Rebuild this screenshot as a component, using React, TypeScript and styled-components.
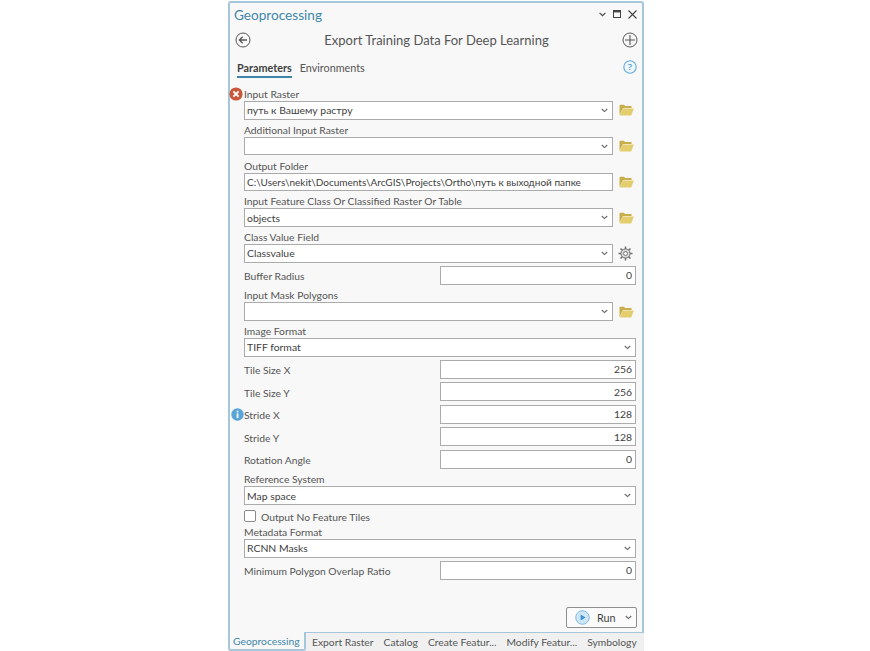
import styled, { createGlobalStyle } from 'styled-components';

const GlobalStyle = createGlobalStyle`
  html, body {
    margin: 0;
    background: #ffffff;
    font-family: "Lato", "Open Sans", sans-serif;
  }
`;

const Chevron = () => (
  <svg width="7" height="5" viewBox="0 0 7 5">
    <path d="M0.8 1 L3.5 3.6 L6.2 1" fill="none" stroke="#666" strokeWidth="1.1" />
  </svg>
);

const FolderIcon = () => (
  <svg width="15" height="12" viewBox="0 0 15 12">
    <path d="M0.5 11 V1.6 Q0.5 0.8 1.3 0.8 H5 L6.2 2 H12 Q12.6 2 12.6 2.8 V4 H4 L0.5 11 Z" fill="#c9ae4e" />
    <path d="M0.7 11.4 L3.9 4.6 H14.8 L12.2 11.4 Z" fill="#e4cd6d" />
  </svg>
);

const GearIcon = () => (
  <svg width="15" height="15" viewBox="0 0 15 15">
    <g stroke="#6f6f6f" strokeWidth="1.5">
      <path d="M7.5 0.5 V14.5 M0.5 7.5 H14.5 M2.5 2.5 L12.5 12.5 M12.5 2.5 L2.5 12.5" />
    </g>
    <circle cx="7.5" cy="7.5" r="4.6" fill="#d8d8d8" stroke="#6f6f6f" strokeWidth="1" />
    <circle cx="7.5" cy="7.5" r="2" fill="#f7f7f7" stroke="#6f6f6f" strokeWidth="0.9" />
  </svg>
);

const ErrorBadge = () => (
  <svg width="14" height="14" viewBox="0 0 14 14">
    <circle cx="7" cy="7" r="6.6" fill="#c9573c" />
    <path d="M4.4 4.4 L9.6 9.6 M9.6 4.4 L4.4 9.6" stroke="#fff" strokeWidth="1.9" />
  </svg>
);

const InfoBadge = () => (
  <svg width="13" height="13" viewBox="0 0 13 13">
    <circle cx="6.5" cy="6.5" r="6.2" fill="#5aa5d8" />
    <rect x="5.7" y="5.4" width="1.7" height="4.6" fill="#fff" />
    <rect x="5.7" y="2.8" width="1.7" height="1.6" fill="#fff" />
  </svg>
);

const RoundBack = () => (
  <svg width="16" height="16" viewBox="0 0 16 16">
    <circle cx="8" cy="8" r="7" fill="none" stroke="#555" strokeWidth="1" />
    <path d="M12 8 H4.6 M7.6 4.8 L4.4 8 L7.6 11.2" fill="none" stroke="#555" strokeWidth="1.3" />
  </svg>
);

const RoundPlus = () => (
  <svg width="16" height="16" viewBox="0 0 16 16">
    <circle cx="8" cy="8" r="7" fill="none" stroke="#555" strokeWidth="1" />
    <path d="M8 3 V13 M3 8 H13" stroke="#555" strokeWidth="1.1" />
  </svg>
);

const HelpIcon = () => (
  <svg width="14" height="14" viewBox="0 0 14 14">
    <circle cx="7" cy="7" r="6.2" fill="#eef6fc" stroke="#62abdc" strokeWidth="1.1" />
    <text x="7" y="10.3" textAnchor="middle" fontSize="9.5" fontWeight="600" fill="#4e9fd6" fontFamily="Open Sans">?</text>
  </svg>
);

const PlayIcon = () => (
  <svg width="15" height="15" viewBox="0 0 15 15">
    <circle cx="7.5" cy="7.5" r="6.8" fill="#cfe6f6" stroke="#7fb9df" strokeWidth="1" />
    <path d="M5.6 4.4 L10.6 7.5 L5.6 10.6 Z" fill="#3f93cf" />
  </svg>
);

const Pane = styled.div`
  box-sizing: border-box;
  width: 416px;
  height: 650px;
  margin: 1px 0 0 228px;
  display: flex;
  flex-direction: column;
  background: #f8f8f8;
  border: 2px solid #a6c6da;
  border-bottom: 0;
  border-radius: 3px 3px 0 0;
  color: #4d4d4d;
`;

const TitleBar = styled.div`
  display: flex;
  align-items: center;
  justify-content: space-between;
  height: 24px;
  padding: 0 5px 0 4px;
`;

const PaneTitle = styled.span`
  font-size: 13.6px;
  color: #3f87a9;
`;

const WindowButtons = styled.div`
  display: flex;
  align-items: center;
  gap: 7px;
  margin-top: -2px;
`;

const Heading = styled.div`
  display: flex;
  align-items: center;
  justify-content: space-between;
  height: 22px;
  margin-top: 2px;
  padding: 0 4px 0 5px;
`;

const HeadingText = styled.span`
  font-size: 13px;
  color: #555555;
`;

const TabsRow = styled.div`
  display: flex;
  align-items: flex-start;
  gap: 8px;
  height: 21px;
  margin-top: 9px;
  padding: 0 5px 0 7px;
`;

const ParamTab = styled.span<{ $active?: boolean }>`
  font-size: 10.8px;
  line-height: 15px;
  padding-bottom: 1px;
  font-weight: ${(p) => (p.$active ? 700 : 400)};
  color: ${(p) => (p.$active ? '#3f3f3f' : '#555555')};
  border-bottom: 2px solid ${(p) => (p.$active ? '#3f87a9' : 'transparent')};
`;

const HelpSlot = styled.span`
  display: flex;
  margin-left: auto;
`;

const Form = styled.div`
  flex: 1;
  display: flex;
  flex-direction: column;
  padding: 4px 6px 0 14px;
`;

const StackedRow = styled.div`
  position: relative;
  display: flex;
  flex-direction: column;
  margin-bottom: 1.25px;
`;

const Label = styled.label`
  font-size: 10.3px;
  line-height: 18px;
  height: 16px;
  white-space: nowrap;
  color: #555555;
`;

const FieldLine = styled.div`
  display: flex;
  align-items: center;
`;

const Field = styled.div<{ $align?: string; $tight?: boolean }>`
  box-sizing: border-box;
  flex: 1;
  min-width: 0;
  height: 18.5px;
  display: flex;
  align-items: center;
  justify-content: ${(p) => (p.$align === 'right' ? 'flex-end' : 'space-between')};
  padding: 0 ${(p) => (p.$align === 'right' ? 3 : 4)}px 0 2px;
  background: #ffffff;
  border: 1px solid #ababab;
  font-size: ${(p) => (p.$tight ? '10px' : '10.4px')};
  color: #404040;
  white-space: nowrap;
`;

const ChevronSlot = styled.span`
  display: flex;
`;

const SideButton = styled.span<{ $gear?: boolean }>`
  flex: none;
  width: 23px;
  display: flex;
  justify-content: flex-end;
  padding-right: ${(p) => (p.$gear ? 3 : 2)}px;
  box-sizing: border-box;
`;

const InlineRow = styled.div`
  position: relative;
  display: flex;
  align-items: center;
  justify-content: space-between;
  height: 19px;
  margin: 2px 0 1.5px;
`;

const ShortField = styled(Field)`
  flex: none;
  width: 196px;
  height: 19px;
`;

const Badge = styled.span<{ $top?: number; $left: number }>`
  position: absolute;
  left: ${(p) => p.$left}px;
  top: ${(p) => p.$top ?? 3}px;
  display: flex;
`;

const CheckRow = styled.div`
  display: flex;
  align-items: center;
  gap: 5px;
  height: 15px;
  margin-top: 2px;
`;

const CheckBox = styled.span`
  box-sizing: border-box;
  width: 12px;
  height: 12px;
  background: #ffffff;
  border: 1px solid #8a8a8a;
  border-radius: 2px;
`;

const RunBar = styled.div`
  display: flex;
  justify-content: flex-end;
  padding: 0 5px 4px 0;
`;

const RunButton = styled.button`
  box-sizing: border-box;
  width: 71px;
  height: 21px;
  display: flex;
  align-items: center;
  gap: 7px;
  padding: 0 4px 0 8px;
  background: #fbfbfb;
  border: 1px solid #8f8f8f;
  border-radius: 2px;
  font: inherit;
  font-size: 10.8px;
  color: #454545;
`;

const RunChevron = styled.span`
  display: flex;
  margin-left: auto;
`;

const DockTabs = styled.div`
  display: flex;
  align-items: stretch;
  height: 18px;
  margin: 0 -2px;
  background: #f0f0f0;
  border-top: 1px solid #a6c6da;
`;

const DockTab = styled.span`
  display: flex;
  align-items: center;
  box-sizing: border-box;
  padding: 0 5px;
  font-size: 10.3px;
  white-space: nowrap;
  color: #555555;
`;

const ActiveDockTab = styled(DockTab)`
  width: 78px;
  margin-top: -1px;
  padding-left: 3px;
  margin-right: 1px;
  color: #3f87a9;
  background: #f8f8f8;
  border: 2px solid #a6c6da;
  border-top: 0;
  border-radius: 0 0 3px 3px;
`;

type StackedProps = {
  label: string;
  value?: string;
  side?: 'folder' | 'gear';
  combo?: boolean;
  tight?: boolean;
  error?: boolean;
};

const Stacked = ({ label, value, side, combo = true, tight, error }: StackedProps) => (
  <StackedRow>
    {error && (
      <Badge $left={-15} $top={2}>
        <ErrorBadge />
      </Badge>
    )}
    <Label>{label}</Label>
    <FieldLine>
      <Field $tight={tight}>
        <span>{value}</span>
        {combo && (
          <ChevronSlot>
            <Chevron />
          </ChevronSlot>
        )}
      </Field>
      {side && (
        <SideButton $gear={side === 'gear'}>{side === 'folder' ? <FolderIcon /> : <GearIcon />}</SideButton>
      )}
    </FieldLine>
  </StackedRow>
);

const Inline = ({ label, value, info }: { label: string; value: string; info?: boolean }) => (
  <InlineRow>
    {info && (
      <Badge $left={-13}>
        <InfoBadge />
      </Badge>
    )}
    <Label>{label}</Label>
    <ShortField $align="right">{value}</ShortField>
  </InlineRow>
);

const dockTabs = ['Export Raster', 'Catalog', 'Create Featur...', 'Modify Featur...', 'Symbology'];

export default function App() {
  return (
    <>
      <GlobalStyle />
      <Pane>
        <TitleBar>
          <PaneTitle>Geoprocessing</PaneTitle>
          <WindowButtons>
            <svg width="7" height="5" viewBox="0 0 7 5">
              <path d="M0.6 0.8 L3.5 3.7 L6.4 0.8" fill="none" stroke="#444" strokeWidth="1.2" />
            </svg>
            <svg width="8" height="8" viewBox="0 0 8 8">
              <rect x="0.5" y="0.5" width="7" height="7" fill="none" stroke="#444" />
              <rect x="0" y="0" width="8" height="2.4" fill="#444" />
            </svg>
            <svg width="9" height="9" viewBox="0 0 9 9">
              <path d="M0.5 0.5 L8.5 8.5 M8.5 0.5 L0.5 8.5" stroke="#444" strokeWidth="1.1" />
            </svg>
          </WindowButtons>
        </TitleBar>
        <Heading>
          <RoundBack />
          <HeadingText>Export Training Data For Deep Learning</HeadingText>
          <RoundPlus />
        </Heading>
        <TabsRow>
          <ParamTab $active>Parameters</ParamTab>
          <ParamTab>Environments</ParamTab>
          <HelpSlot>
            <HelpIcon />
          </HelpSlot>
        </TabsRow>
        <Form>
          <Stacked label="Input Raster" value="путь к Вашему растру" side="folder" error />
          <Stacked label="Additional Input Raster" side="folder" />
          <Stacked
            label="Output Folder"
            value="C:\Users\nekit\Documents\ArcGIS\Projects\Ortho\путь к выходной папке"
            side="folder"
            combo={false}
            tight
          />
          <Stacked label="Input Feature Class Or Classified Raster Or Table" value="objects" side="folder" />
          <Stacked label="Class Value Field" value="Classvalue" side="gear" />
          <Inline label="Buffer Radius" value="0" />
          <Stacked label="Input Mask Polygons" side="folder" />
          <Stacked label="Image Format" value="TIFF format" />
          <Inline label="Tile Size X" value="256" />
          <Inline label="Tile Size Y" value="256" />
          <Inline label="Stride X" value="128" info />
          <Inline label="Stride Y" value="128" />
          <Inline label="Rotation Angle" value="0" />
          <Stacked label="Reference System" value="Map space" />
          <CheckRow>
            <CheckBox />
            <Label>Output No Feature Tiles</Label>
          </CheckRow>
          <Stacked label="Metadata Format" value="RCNN Masks" />
          <Inline label="Minimum Polygon Overlap Ratio" value="0" />
        </Form>
        <RunBar>
          <RunButton>
            <PlayIcon />
            Run
            <RunChevron>
              <Chevron />
            </RunChevron>
          </RunButton>
        </RunBar>
        <DockTabs>
          <ActiveDockTab>Geoprocessing</ActiveDockTab>
          {dockTabs.map((tab) => (
            <DockTab key={tab}>{tab}</DockTab>
          ))}
        </DockTabs>
      </Pane>
    </>
  );
}
